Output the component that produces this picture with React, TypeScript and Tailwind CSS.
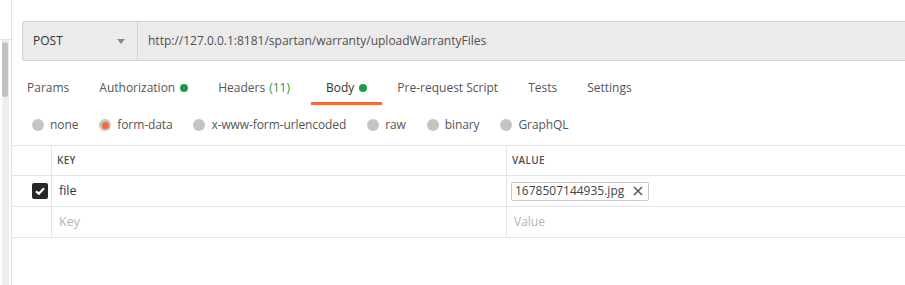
import React from "react";

const Dot = () => <span className="ml-[5px] inline-block h-[8px] w-[8px] rounded-full bg-[#1c9c4b]" />;

function Tab({ label, active, dot, extra }: { label: string; active?: boolean; dot?: boolean; extra?: string }) {
  return (
    <div className="relative flex h-[34px] items-center px-[15px]">
      <span className={active ? "text-[#333]" : "text-[#555]"}>{label}</span>
      {extra && <span className="ml-[4px] mr-[6px] text-[#1c9c4b]">{extra}</span>}
      {dot && <Dot />}
      {active && <div className="absolute bottom-0 left-0 right-0 h-[3px] bg-[#f26b3a]" />}
    </div>
  );
}

function Radio({ label, checked }: { label: string; checked?: boolean }) {
  return (
    <div className="flex items-center">
      <span className="flex h-[12px] w-[12px] items-center justify-center rounded-full bg-[#c4c4c4]">
        {checked && <span className="h-[7px] w-[7px] rounded-full bg-[#f26b3a]" />}
      </span>
      <span className="ml-[6px] tracking-[-0.1px] text-[#555]">{label}</span>
    </div>
  );
}

export default function App() {
  return (
    <div
      className="flex h-[285px] w-[905px] overflow-hidden bg-white text-[12px]"
      style={{ fontFamily: '"Open Sans", "Noto Sans", sans-serif' }}
    >
      {/* left scroll strip */}
      <div className="flex w-[12px] shrink-0 flex-col border-r border-[#e2e2e2]">
        <div className="h-[40px] border-b border-[#e2e2e2]" />
        <div className="flex-1 bg-white pl-[2px] pr-[2px]">
          <div className="h-full w-[7px] bg-[#ededed] pt-[2px]">
            <div className="h-[55px] w-[6px] rounded-[3px] bg-[#c1c1c1]" />
          </div>
        </div>
      </div>

      {/* main pane */}
      <div className="flex flex-1 flex-col">
        <div className="pl-[10px] pt-[21px]">
          <div className="flex h-[40px] rounded-l-[3px] border-y border-l border-[#d3d3d3] bg-[#ebebeb]">
            <div className="flex w-[115px] items-center justify-between border-r border-[#d3d3d3] pl-[10px] pr-[12px]">
              <span className="text-[12px] text-[#333]">POST</span>
              <svg width="8" height="5" viewBox="0 0 8 5">
                <path d="M0 0 L8 0 L4 5 Z" fill="#8a8a8a" />
              </svg>
            </div>
            <div className="flex items-center pl-[10px] text-[#505050]">
              http://127.0.0.1:8181/spartan/warranty/uploadWarrantyFiles
            </div>
          </div>
        </div>

        <div className="mt-[10px] flex">
          <Tab label="Params" />
          <Tab label="Authorization" dot />
          <Tab label="Headers" extra="(11)" />
          <Tab label="Body" dot active />
          <Tab label="Pre-request Script" />
          <Tab label="Tests" />
          <Tab label="Settings" />
        </div>

        <div className="flex h-[40px] items-center gap-[21px] pl-[20px]">
          <Radio label="none" />
          <Radio label="form-data" checked />
          <Radio label="x-www-form-urlencoded" />
          <Radio label="raw" />
          <Radio label="binary" />
          <Radio label="GraphQL" />
        </div>

        <div className="border-t border-[#e3e3e3]">
          <div className="flex h-[30px] border-b border-[#e3e3e3]">
            <div className="w-[40px] border-r border-[#e3e3e3]" />
            <div className="flex w-[455px] items-center border-r border-[#e3e3e3] pl-[5px] text-[10px] font-semibold tracking-[0.3px] text-[#505050]">
              KEY
            </div>
            <div className="flex flex-1 items-center pl-[5px] text-[10px] font-semibold tracking-[0.3px] text-[#505050]">
              VALUE
            </div>
          </div>
          <div className="flex h-[31px] border-b border-[#e3e3e3]">
            <div className="flex w-[40px] items-center justify-end border-r border-[#e3e3e3] pr-[3px]">
              <span className="flex h-[16px] w-[16px] items-center justify-center rounded-[2px] bg-[#282828]">
                <svg width="10" height="8" viewBox="0 0 10 8">
                  <path d="M1 4.2 L3.8 6.8 L9 1.2" stroke="white" strokeWidth="2.2" fill="none" />
                </svg>
              </span>
            </div>
            <div className="flex w-[455px] items-center border-r border-[#e3e3e3] pl-[7px] text-[12.5px] text-[#333]">
              file
            </div>
            <div className="flex flex-1 items-center pl-[4px]">
              <div className="flex h-[19px] items-center rounded-[2px] border border-[#c8c8c8] pl-[3px] pr-[5px] text-[12px] text-[#444]">
                1678507144935.jpg
                <svg className="ml-[9px]" width="10" height="10" viewBox="0 0 10 10">
                  <path d="M1 1 L9 9 M9 1 L1 9" stroke="#555" strokeWidth="1.5" />
                </svg>
              </div>
            </div>
          </div>
          <div className="flex h-[31px] border-b border-[#e3e3e3]">
            <div className="w-[40px] border-r border-[#e3e3e3]" />
            <div className="flex w-[455px] items-center border-r border-[#e3e3e3] pl-[7px] text-[12.5px] text-[#b3b3b3]">
              Key
            </div>
            <div className="flex flex-1 items-center pl-[7px] text-[12px] text-[#b3b3b3]">Value</div>
          </div>
        </div>
      </div>
    </div>
  );
}
